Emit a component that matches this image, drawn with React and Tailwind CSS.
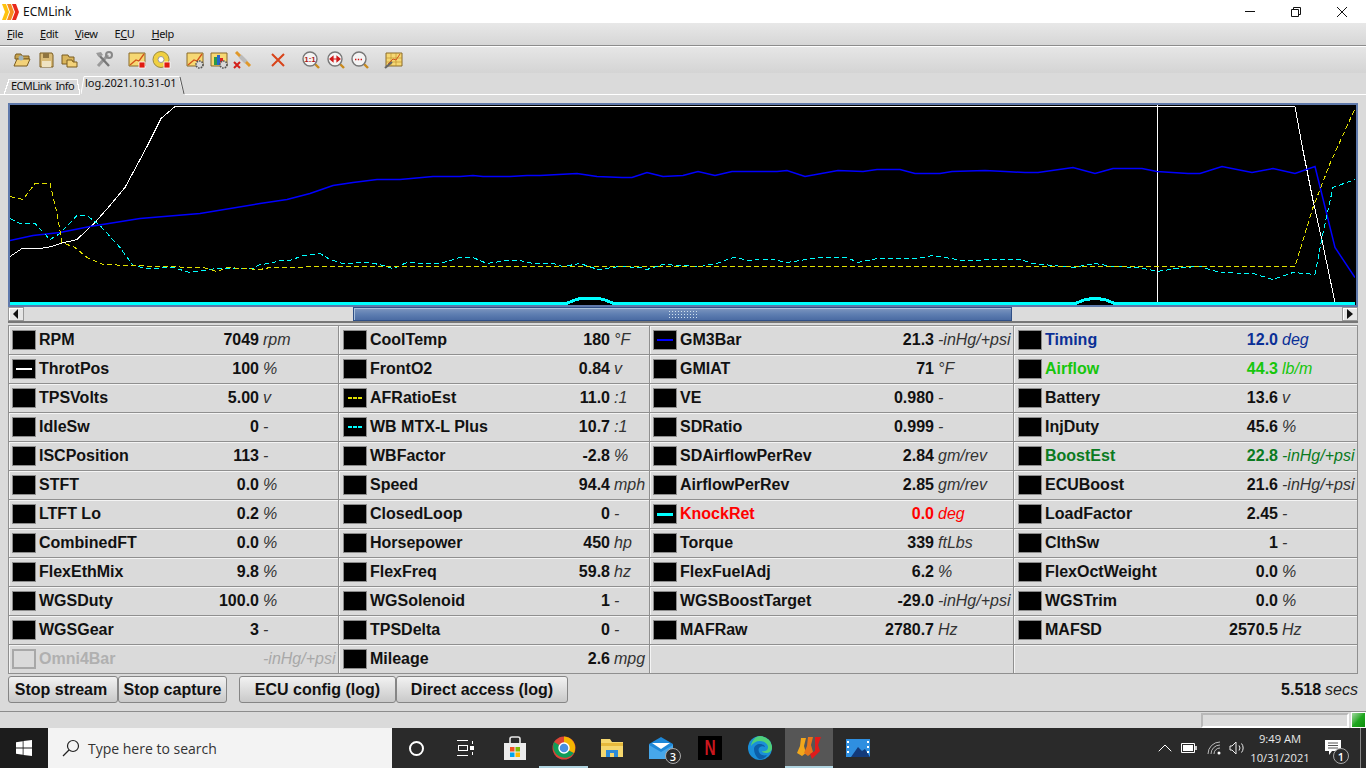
import { ChevronUp } from "lucide-react";

const WHITE = "10,256 22,248 40,248 52,246 60,243 77,239 95,222 110,205 125,187 147,146 161,118 175,106 1295,106 1303,150 1313,200 1322,240 1335,302";
const BLUE = "10,240 33,235 60,232 90,226 140,218 200,213 260,203 287,199 310,193 333,185 353,182 377,179 400,179 433,176 460,176 473,175 483,176 510,176 527,175 540,175 577,173 597,176 622,177 632,177 647,172 663,176 683,175 698,171 715,175 732,171 777,171 787,170 805,176 838,170 863,171 877,169 900,169 915,173 940,173 952,171 985,170 1005,171 1025,172 1038,172 1073,167 1095,173 1113,168 1142,168 1157,171 1188,173 1200,173 1222,166 1252,172 1273,168 1295,173 1315,166 1335,247 1355,277";
const YELLOW = "10,196 23,199 35,183 50,183 57,213 62,242 75,247 87,257 103,264 157,266 203,267 217,271 227,267 260,269 270,267 303,267 310,266 1295,266 1313,207 1330,163 1355,108";
const CYAN = "10,218 20,223 35,223 50,239 60,233 77,215 87,215 100,225 120,247 133,265 147,268 173,267 190,272 203,270 217,268 253,268 260,264 270,263 280,260 290,260 303,255 320,253 330,259 343,263 370,262 383,265 393,268 407,262 423,263 440,263 460,257 473,257 487,263 507,260 520,260 533,263 553,263 563,266 580,263 598,269 620,266 640,267 647,269 663,264 700,266 717,263 733,257 750,260 760,259 773,259 787,262 800,260 820,257 847,257 858,262 877,258 917,258 933,255 963,260 1000,259 1020,259 1033,263 1073,267 1095,263 1113,266 1140,267 1157,271 1183,267 1200,266 1220,272 1253,273 1273,279 1293,272 1315,274 1322,237 1333,187 1355,179";
const KNOCK = "10,303.5 566,303.5 575,300 582,298 597,298 605,300 614,303.5 1075,303.5 1084,300 1095,298 1106,300 1115,303.5 1355,303.5";

const COLS = [
  {
    width: "w-[330px]",
    pad: "pl-[3px]",
    unit: "w-[75px]",
    cells: [
      ["RPM", "7049", "rpm"],
      ["ThrotPos", "100", "%", "white"],
      ["TPSVolts", "5.00", "v"],
      ["IdleSw", "0", "-"],
      ["ISCPosition", "113", "-"],
      ["STFT", "0.0", "%"],
      ["LTFT Lo", "0.2", "%"],
      ["CombinedFT", "0.0", "%"],
      ["FlexEthMix", "9.8", "%"],
      ["WGSDuty", "100.0", "%"],
      ["WGSGear", "3", "-"],
      ["Omni4Bar", "", "-inHg/+psi", "off"],
    ],
  },
  {
    width: "w-[311px]",
    pad: "pl-[4px]",
    unit: "w-[35px]",
    cells: [
      ["CoolTemp", "180", "°F"],
      ["FrontO2", "0.84", "v"],
      ["AFRatioEst", "11.0", ":1", "yellow"],
      ["WB MTX-L Plus", "10.7", ":1", "cyan"],
      ["WBFactor", "-2.8", "%"],
      ["Speed", "94.4", "mph"],
      ["ClosedLoop", "0", "-"],
      ["Horsepower", "450", "hp"],
      ["FlexFreq", "59.8", "hz"],
      ["WGSolenoid", "1", "-"],
      ["TPSDelta", "0", "-"],
      ["Mileage", "2.6", "mpg"],
    ],
  },
  {
    width: "w-[364px]",
    pad: "pl-[3px]",
    unit: "w-[75px]",
    cells: [
      ["GM3Bar", "21.3", "-inHg/+psi", "blue"],
      ["GMIAT", "71", "°F"],
      ["VE", "0.980", "-"],
      ["SDRatio", "0.999", "-"],
      ["SDAirflowPerRev", "2.84", "gm/rev"],
      ["AirflowPerRev", "2.85", "gm/rev"],
      ["KnockRet", "0.0", "deg", "knock", "text-[#ff0000]"],
      ["Torque", "339", "ftLbs"],
      ["FlexFuelAdj", "6.2", "%"],
      ["WGSBoostTarget", "-29.0", "-inHg/+psi"],
      ["MAFRaw", "2780.7", "Hz"],
      null,
    ],
  },
  {
    width: "w-[344px]",
    pad: "pl-[4px]",
    unit: "w-[75px]",
    cells: [
      ["Timing", "12.0", "deg", null, "text-[#0a2f96]"],
      ["Airflow", "44.3", "lb/m", null, "text-[#16c60c]"],
      ["Battery", "13.6", "v"],
      ["InjDuty", "45.6", "%"],
      ["BoostEst", "22.8", "-inHg/+psi", null, "text-[#0b7a22]"],
      ["ECUBoost", "21.6", "-inHg/+psi"],
      ["LoadFactor", "2.45", "-"],
      ["ClthSw", "1", "-"],
      ["FlexOctWeight", "0.0", "%"],
      ["WGSTrim", "0.0", "%"],
      ["MAFSD", "2570.5", "Hz"],
      null,
    ],
  },
];

function Swatch({ kind }) {
  if (kind === "off") {
    return <span className="h-[20px] w-[24px] shrink-0 border-2 border-[#a8a8a8]" />;
  }
  const lines = {
    white: <line x1="3" y1="9" x2="19" y2="9" stroke="#fff" strokeWidth="2" />,
    yellow: <line x1="4" y1="9" x2="18" y2="9" stroke="#e0e000" strokeWidth="2" strokeDasharray="4 1" />,
    cyan: <line x1="4" y1="9" x2="18" y2="9" stroke="#00ffff" strokeWidth="2" strokeDasharray="4 1" />,
    blue: <line x1="3" y1="9" x2="19" y2="9" stroke="#0000ff" strokeWidth="2" />,
    knock: <line x1="3" y1="9" x2="19" y2="9" stroke="#00ffff" strokeWidth="3" />,
  };
  return (
    <span className="h-[20px] w-[24px] shrink-0 border border-[#8c8c8c] bg-black">
      <svg width="22" height="18" viewBox="0 0 22 18" shapeRendering="crispEdges">
        {lines[kind]}
      </svg>
    </span>
  );
}

function Cell({ cell, col }) {
  if (!cell) return <div className="h-[29px] border-b border-r border-[#8f8f8f] shadow-[inset_1px_1px_0_#f4f4f4]" />;
  const [name, value, unit, kind, color] = cell;
  const off = kind === "off";
  return (
    <div className={`flex h-[29px] items-center border-b border-r border-[#8f8f8f] shadow-[inset_1px_1px_0_#f4f4f4] ${col.pad}`}>
      <Swatch kind={kind} />
      <span className={`ml-[3px] flex-1 whitespace-nowrap font-bold ${off ? "text-[#b0b0b0]" : color || "text-[#111]"}`}>{name}</span>
      <span className={`whitespace-nowrap font-bold ${color || "text-[#111]"}`}>{value}</span>
      <span className={`${col.unit} ml-[4px] shrink-0 whitespace-nowrap italic ${off ? "text-[#a8a8a8]" : color || "text-[#333]"}`}>{unit}</span>
    </div>
  );
}

function Chart() {
  return (
    <div className="h-[204px] border-2 border-[#5f79ab] bg-black">
      <svg width="1345" height="200" viewBox="10 105 1345 200" shapeRendering="crispEdges" fill="none">
        <line x1="1157.5" y1="105" x2="1157.5" y2="303" stroke="#fff" />
        <g transform="translate(0 .5)">
          <polyline points={WHITE} stroke="#fff" strokeWidth="1" />
          <polyline points={BLUE} stroke="#0000ff" strokeWidth="1.5" shapeRendering="auto" />
          <polyline points={CYAN} stroke="#00ffff" strokeWidth="1" strokeDasharray="5 3" />
          <polyline points={YELLOW} stroke="#e0e000" strokeWidth="1" strokeDasharray="5 3" />
        </g>
        <polyline points={KNOCK} stroke="#00ffff" strokeWidth="3" />
      </svg>
    </div>
  );
}

function ScrollBar() {
  return (
    <div className="flex h-[16px] border-b-2 border-[#777] bg-[#dcdcdc]">
      <button className="flex w-[16px] items-center justify-center border border-[#999] bg-[#e6e6e6] shadow-[inset_1px_1px_0_#fff]">
        <svg width="6" height="10" viewBox="0 0 6 10"><path d="M5 0v10L0 5z" fill="#111" /></svg>
      </button>
      <div className="w-[329px]" />
      <div className="flex w-[659px] items-center justify-center border border-[#2f4f86] bg-gradient-to-b from-[#7f97bf] via-[#5f7fb2] to-[#4a6ba3] shadow-[inset_1px_1px_0_#a8c0dc]">
        <span className="h-[9px] w-[30px] bg-[radial-gradient(#cfe0ee_0.7px,transparent_0.9px)] bg-[length:3px_3px]" />
      </div>
      <div className="flex-1" />
      <button className="flex w-[16px] items-center justify-center border border-[#999] bg-[#e6e6e6] shadow-[inset_1px_1px_0_#fff]">
        <svg width="6" height="10" viewBox="0 0 6 10"><path d="M0 0v10l6-5z" fill="#111" /></svg>
      </button>
    </div>
  );
}

function AppIcon() {
  return (
    <svg width="18" height="18" viewBox="0 0 18 18">
      <path d="M0 1h4l3 8-3 8H0l3-8z" fill="#ffc20e" />
      <path d="M5 1h4l3 8-3 8H5l3-8z" fill="#f68b1f" />
      <path d="M10 1h4l3 8-3 8h-4l3-8z" fill="#e8291c" />
    </svg>
  );
}

// small toolbar pictures, all on a 20x20 box
const paper = <path d="M2 3h16v13H2z" fill="#f6d873" stroke="#8a6a2a" />;
const redSquare = <path d="M12 12h6v6h-6z" fill="#e01b10" stroke="#fff" strokeWidth=".8" />;
const gear = <circle cx="14.5" cy="14.5" r="3.5" fill="#d8d8d8" stroke="#555" strokeWidth="1.6" strokeDasharray="1.6 1" />;
const lens = (
  <>
    <path d="M13 13l5 5" stroke="#c98a1c" strokeWidth="2.4" />
    <circle cx="9" cy="9" r="7" fill="#f4f4f4" stroke="#777" strokeWidth="1.4" />
  </>
);

const TOOLS = [
  ["ml-[12px]", <><path d="M3 6l1-2h5l1 2h7v3H3z" fill="#c6a24e" stroke="#7a5c20" /><path d="M2 16l3-7h13l-3 7z" fill="#f3d27a" stroke="#7a5c20" /><circle cx="9" cy="8" r="2.5" fill="#9fb3bd" /></>],
  ["ml-[4px]", <><path d="M4 3h12l1 2v12H4z" fill="#d9bb78" stroke="#7a5c20" /><path d="M7 3h6v5H7z" fill="#8f7440" /><path d="M6 11h9v6H6z" fill="#efe3c2" /></>],
  ["ml-[4px]", <><path d="M2 5h6l1 2h5v7H2z" fill="#d9b55c" stroke="#7a5c20" /><path d="M7 10h5l1 2h4v5H7z" fill="#f3d27a" stroke="#7a5c20" /></>],
  ["ml-[14px]", <><path d="M4 16L14 5" stroke="#9a9a9a" strokeWidth="3" /><path d="M4 4l11 12" stroke="#777" strokeWidth="2.4" /><path d="M2 3l5-1 2 3-4 2z" fill="#9a9a9a" /><circle cx="15" cy="5" r="3" fill="none" stroke="#888" strokeWidth="2" /></>],
  ["ml-[13px]", <>{paper}<path d="M3 15l6-5 3 1 5-7" fill="none" stroke="#d2531c" strokeWidth="1.3" />{redSquare}</>],
  ["ml-[5px]", <><circle cx="9" cy="9.5" r="8" fill="#f0d040" stroke="#9a8a40" /><circle cx="9" cy="9.5" r="3" fill="#fff" stroke="#999" />{redSquare}</>],
  ["ml-[13px]", <>{paper}<path d="M3 15l6-5 3 1 5-7" fill="none" stroke="#d2531c" strokeWidth="1.3" />{gear}</>],
  ["ml-[4px]", <>{paper}<path d="M5 7h3v8H5z" fill="#2a9a4a" /><path d="M8 5h3v10H8z" fill="#2266cc" /><path d="M11 8h3v7h-3z" fill="#d22" />{gear}</>],
  ["ml-[4px]", <><path d="M3 2l14 14" stroke="#e0982a" strokeWidth="3" /><path d="M7 6l6 6" stroke="#bbb" strokeWidth="4" /><path d="M1 12l6 6M7 12l-6 6" stroke="#d3201a" strokeWidth="2" /></>],
  ["ml-[15px]", <path d="M4 4l12 12M16 4L4 16" stroke="#d8431a" strokeWidth="2" />],
  ["ml-[13px]", <>{lens}<text x="9" y="12" fontSize="8" fontWeight="700" textAnchor="middle" fill="#b01818" fontFamily="Liberation Sans, sans-serif">1:1</text></>],
  ["ml-[5px]", <>{lens}<path d="M4 9h10M4 9l3-2.5v5zM14 9l-3-2.5v5z" stroke="#d01818" fill="#d01818" strokeWidth="1.2" /></>],
  ["ml-[4px]", <>{lens}<path d="M5 9.5h8" stroke="#d01818" strokeWidth="1.4" strokeDasharray="1.4 1.4" /></>],
  ["ml-[14px]", <>{paper}<path d="M2 8h16M2 12h16M7 3v13M12 3v13" stroke="#b98a2a" strokeWidth=".6" /><path d="M4 14l5-5 3 1 4-6" fill="none" stroke="#d2531c" /><path d="M1 18l7-6" stroke="#666" strokeWidth="2.2" /></>],
];

function Toolbar() {
  return (
    <div className="flex h-[26px] items-center bg-gradient-to-b from-[#e6e6e6] to-[#d4d4d4]">
      {TOOLS.map(([gap, icon], i) => (
        <svg key={i} width="20" height="20" viewBox="0 0 20 20" className={`shrink-0 ${gap}`}>
          {icon}
        </svg>
      ))}
    </div>
  );
}

function Tabs() {
  return (
    <div className="flex h-[22px] items-end bg-[#dadada] font-['Noto_Sans',sans-serif] text-[11px] text-[#111]">
      <div className="h-[1px] w-[4px] bg-white" />
      <div className="relative flex h-[17px] w-[76px] items-start pl-[7px] pt-[2px] leading-none">
        <svg width="76" height="17" className="absolute inset-0" fill="none" shapeRendering="crispEdges">
          <path d="M0 16.5L5 1.5h68l3 15" stroke="#fff" />
          <path d="M0 16.5h76" stroke="#fff" />
        </svg>
        <span className="relative tracking-[-0.6px] [word-spacing:2px]">ECMLink Info</span>
      </div>
      <div className="relative ml-[1px] flex h-[19px] w-[104px] items-start pl-[4px] pt-[1px] leading-none">
        <svg width="104" height="19" className="absolute inset-0" fill="none">
          <path d="M0 18L3 .5h95l5 18" stroke="#fff" />
          <path d="M99 1l4 17" stroke="#555" />
        </svg>
        <span className="relative">log.2021.10.31-01</span>
      </div>
      <div className="flex-1 border-b border-white" />
    </div>
  );
}

const BTN = "h-[27px] rounded-[3px] border border-[#858585] bg-gradient-to-b from-[#f2f2f2] to-[#c9c9c9] font-bold text-[#111]";

const TRAY = "flex h-full shrink-0 items-center justify-center";

function Taskbar() {
  return (
    <div className="flex h-[40px] items-center bg-[#2a2a2a] font-['Open_Sans',sans-serif] text-white">
      <div className={`${TRAY} w-[48px] bg-[#1c1c1c]`}>
        <svg width="16" height="16" viewBox="0 0 16 16" fill="#fff">
          <path d="M0 2.2l6.7-1v6.4H0zM7.5 1.1L16 0v7.6H7.5zM0 8.4h6.7v6.4l-6.7-1zM7.5 8.4H16V16l-8.5-1.1z" />
        </svg>
      </div>
      <div className="flex h-full w-[344px] shrink-0 items-center bg-[#f3f3f3] pl-[14px] text-[14px] text-[#333]">
        <svg width="18" height="18" viewBox="0 0 18 18" fill="none" stroke="#222" strokeWidth="1.2">
          <circle cx="11" cy="7" r="5.5" />
          <path d="M7 11l-6 6" />
        </svg>
        <span className="ml-[8px]">Type here to search</span>
      </div>
      <div className={`${TRAY} w-[49px]`}>
        <span className="h-[15px] w-[15px] rounded-full border-2 border-white" />
      </div>
      <div className={`${TRAY} w-[49px]`}>
        <svg width="17" height="16" viewBox="0 0 17 16" fill="none" stroke="#fff" shapeRendering="crispEdges">
          <path d="M0 .5h11M0 15.5h11M1 5.5h9v5H1zM15 1v3M15 12v3" />
          <path d="M13 6h3v3h-3z" fill="#fff" />
        </svg>
      </div>
      <div className={`${TRAY} w-[49px]`}>
        <svg width="24" height="24" viewBox="0 0 24 24">
          <path d="M7 7V3a2 2 0 012-2h6a2 2 0 012 2v4" fill="none" stroke="#e6e6e6" strokeWidth="1.6" />
          <path d="M1 7h22v17H1z" fill="#ececec" />
          <path d="M7 11h4.5v4.5H7z" fill="#f25022" />
          <path d="M12.5 11H17v4.5h-4.5z" fill="#7fba00" />
          <path d="M7 16.5h4.5V21H7z" fill="#00a4ef" />
          <path d="M12.5 16.5H17V21h-4.5z" fill="#ffb900" />
        </svg>
      </div>
      <div className={`${TRAY} relative w-[49px]`}>
        <svg width="24" height="24" viewBox="0 0 24 24">
          <circle cx="12" cy="12" r="11.5" fill="#db4437" />
          <path d="M12 12L2 6a11.5 11.5 0 0020 11z" fill="#0f9d58" />
          <path d="M12 .5A11.5 11.5 0 0122 17l-10-5z" fill="#f4b400" />
          <circle cx="12" cy="12" r="5" fill="#4a8fe0" stroke="#fff" strokeWidth="1.4" />
        </svg>
        <span className="absolute bottom-0 left-0 right-0 h-[2px] bg-[#b0d4e0]" />
      </div>
      <div className={`${TRAY} w-[48px]`}>
        <svg width="22" height="20" viewBox="0 0 22 20">
          <path d="M0 1h9l2 3h11v15H0z" fill="#f5d76e" />
          <path d="M0 5h22v3H0z" fill="#e6b93c" />
          <path d="M5 12h12v7H5z" fill="#2e8bd8" />
          <path d="M9 15h4v4H9z" fill="#f5d76e" />
        </svg>
      </div>
      <div className={`${TRAY} relative w-[49px]`}>
        <svg width="24" height="22" viewBox="0 0 24 22">
          <path d="M0 7L12 0l12 7v15H0z" fill="#1e88d8" />
          <path d="M3 6h18l-9 6z" fill="#fff" />
          <path d="M0 8l12 7 12-7v14H0z" fill="#47a7ea" />
        </svg>
        <span className="absolute left-[29px] top-[20px] flex h-[16px] w-[16px] items-center justify-center rounded-full border border-[#aaa] bg-[#2a2a2a] text-[11px] font-semibold leading-none">3</span>
      </div>
      <div className={`${TRAY} w-[50px]`}>
        <span className="flex h-[24px] w-[24px] items-center justify-center bg-black">
          <span className="scale-x-[0.7] font-['Liberation_Sans',sans-serif] text-[22px] font-bold leading-none text-[#c9171e]">N</span>
        </span>
      </div>
      <div className={`${TRAY} w-[50px]`}>
        <svg width="24" height="24" viewBox="0 0 24 24">
          <circle cx="12" cy="12" r="12" fill="#1a8fd8" />
          <path d="M12 0a12 12 0 0112 12c0 3-3 5-6 5-2 0-4-1-4-2 5 1 6-2 6-4 0-3-4-6-8-6-4 0-7 2-9 5C4 4 8 0 12 0z" fill="#4fd07a" />
          <path d="M6 13c0-3 3-5 6-5 3 0 5 2 5 3-3-2-8 0-6 5 1 3 5 4 8 3-2 3-5 5-8 4-3-2-5-6-5-10z" fill="#0c5fa8" />
        </svg>
      </div>
      <div className={`${TRAY} relative w-[48px] bg-[#565656]`}>
        <svg width="26" height="24" viewBox="0 0 26 24">
          <path d="M5 2h5l-2 8 2 7-4 3-5-3 3-7z" fill="#f2a71b" />
          <path d="M12 1h5l-2 8 2 7-5 4-4-3 3-7z" fill="#e8751a" />
          <path d="M19 1h6l-3 8 2 6-8 8-2-5 5-3z" fill="#e01b1b" />
        </svg>
        <span className="absolute bottom-0 left-0 right-0 h-[2px] bg-[#b0d4e0]" />
      </div>
      <div className={`${TRAY} w-[49px]`}>
        <svg width="24" height="18" viewBox="0 0 24 18">
          <path d="M0 0h24v18H0z" fill="#2f8fe0" />
          <path d="M5 18l7-10 4 4 3-2 5 8z" fill="#133a7a" />
          <path d="M1 2h2v2H1zM1 7h2v2H1zM1 12h2v2H1zM21 2h2v2h-2zM21 7h2v2h-2zM21 12h2v2h-2z" fill="#fff" />
        </svg>
      </div>
      <div className="flex-1" />
      <ChevronUp className="h-[24px] w-[24px] shrink-0" strokeWidth={1} />
      <svg width="16" height="10" viewBox="0 0 16 10" className="ml-[4px] shrink-0" fill="none" stroke="#fff">
        <path d="M.5.5h13v9H.5z" />
        <path d="M2 2h10v6H2z" fill="#fff" stroke="none" />
        <path d="M15 3v4" strokeWidth="1.5" />
      </svg>
      <svg width="14" height="14" viewBox="0 0 14 14" className="ml-[10px] shrink-0" fill="none" stroke="#ccc">
        <path d="M1 13A12 12 0 0113 1M4 13a9 9 0 019-9M7 13a6 6 0 016-6" strokeWidth=".9" />
        <circle cx="12" cy="12" r="1.5" fill="#fff" stroke="none" />
      </svg>
      <svg width="16" height="14" viewBox="0 0 16 14" className="ml-[8px] shrink-0" fill="none" stroke="#eee">
        <path d="M1 5h2l4-4v12L3 9H1zM10 4.5a4 4 0 010 5M12.5 2.5a7 7 0 010 9" />
      </svg>
      <div className="flex w-[70px] shrink-0 flex-col items-center text-[11.2px] leading-[19px] text-[#e8e8e8]">
        <span>9:49 AM</span>
        <span>10/31/2021</span>
      </div>
      <div className="relative ml-[18px] mr-[5px] h-full w-[28px] shrink-0 border-r border-[#888]">
        <svg width="16" height="15" viewBox="0 0 16 15" className="absolute left-[-8px] top-[12px]" fill="#fff">
          <path d="M0 0h16v11H7l-3 4v-4H0z" />
          <path d="M3 3h10M3 5.5h10M3 8h10" stroke="#2a2a2a" strokeWidth=".8" />
        </svg>
        <span className="absolute left-0 top-[20px] flex h-[16px] w-[16px] items-center justify-center rounded-full border border-[#aaa] bg-[#2a2a2a] text-[11px] font-semibold leading-none">1</span>
      </div>
    </div>
  );
}

export default function App() {
  return (
    <div className="flex h-[768px] w-[1366px] flex-col overflow-hidden bg-[#dadada] font-['Liberation_Sans',sans-serif] text-[16px]">
      <div className="flex h-[23px] shrink-0 items-center bg-white pl-[2px] font-['Noto_Sans',sans-serif] text-[12px] text-[#111]">
        <AppIcon />
        <span className="ml-[3px]">ECMLink</span>
        <div className="flex-1" />
        <svg width="10" height="1" className="mr-[36px]"><path d="M0 .5h10" stroke="#111" /></svg>
        <svg width="10" height="10" viewBox="0 0 10 10" className="mr-[36px]" fill="none" stroke="#111">
          <path d="M.5 2.5h7v7h-7zM2.5 2.5v-2h7v7h-2" />
        </svg>
        <svg width="10" height="10" viewBox="0 0 10 10" className="mr-[19px]" stroke="#111">
          <path d="M0 0l10 10M10 0L0 10" />
        </svg>
      </div>
      <div className="flex h-[23px] shrink-0 items-center gap-[17px] border-b border-[#8c8c8c] bg-gradient-to-b from-[#e8e8e8] to-[#d6d6d6] pl-[7px] font-['Noto_Sans',sans-serif] text-[11px] tracking-[-0.4px] text-[#111]">
        <span><u>F</u>ile</span>
        <span><u>E</u>dit</span>
        <span><u>V</u>iew</span>
        <span>E<u>C</u>U</span>
        <span><u>H</u>elp</span>
      </div>
      <div className="h-[1px] shrink-0 bg-white" />
      <Toolbar />
      <Tabs />
      <div className="flex-1 px-[8px] pt-[8px]">
        <Chart />
        <ScrollBar />
        <div className="mt-[2px] flex border-l border-t border-[#8f8f8f]">
          {COLS.map((col, i) => (
            <div key={i} className={col.width}>
              {col.cells.map((cell, j) => (
                <Cell key={j} cell={cell} col={col} />
              ))}
            </div>
          ))}
        </div>
        <div className="mt-[2px] flex items-center">
          <button className={`${BTN} w-[110px] pr-[4px]`}>Stop stream</button>
          <button className={`${BTN} w-[109px]`}>Stop capture</button>
          <button className={`${BTN} ml-[12px] w-[157px]`}>ECU config (log)</button>
          <button className={`${BTN} w-[172px]`}>Direct access (log)</button>
          <span className="ml-auto font-bold text-[#111]">5.518</span>
          <span className="ml-[4px] italic text-[#222]">secs</span>
        </div>
      </div>
      <div className="flex h-[17px] shrink-0 justify-end border-t border-[#8c8c8c]">
        <div className="mt-[1px] w-[148px] border-2 border-[#b8b8b8] border-b-white border-r-white bg-[#dcdcdc]" />
        <div className="ml-[2px] flex w-[15px] justify-center bg-white pt-[1px]">
          <span className="h-[14px] w-[13px] bg-gradient-to-br from-[#9ad89a] via-[#1fa81f] to-[#0a8f0a]" />
        </div>
      </div>
      <Taskbar />
    </div>
  );
}
